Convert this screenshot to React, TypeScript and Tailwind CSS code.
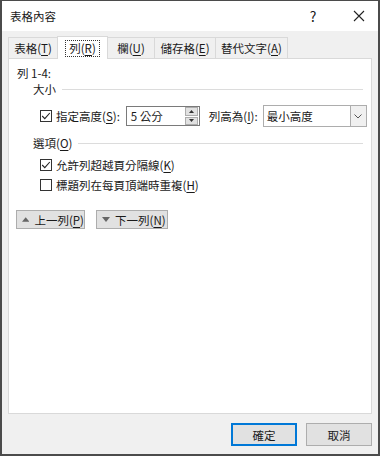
import React from "react";

const font = { fontFamily: '"Noto Sans CJK TC", "Microsoft JhengHei", sans-serif' };

function Key({ label, k }: { label: string; k: string }) {
  return (
    <span className="whitespace-nowrap">
      {label}(<span className="underline underline-offset-2">{k}</span>)
    </span>
  );
}

function Check({ on }: { on?: boolean }) {
  return (
    <span className="w-[12px] h-[12px] border border-[#333] bg-white flex items-center justify-center shrink-0">
      {on && (
        <svg width="10" height="10" viewBox="0 0 10 10">
          <path d="M1.2 5 L3.8 7.6 L8.8 2" fill="none" stroke="#222" strokeWidth="1.1" />
        </svg>
      )}
    </span>
  );
}

function Group({ children }: { children: React.ReactNode }) {
  return (
    <div className="flex items-center gap-[6px] pl-[24px] pr-[8px]">
      <span>{children}</span>
      <span className="flex-1 h-px bg-[#dcdcdc]" />
    </div>
  );
}

function Tab({ children, active, w }: { children: React.ReactNode; active?: boolean; w: string }) {
  if (active) {
    return (
      <div className={`${w} h-[23px] -mb-px -ml-px bg-white border border-b-0 border-[#d9d9d9] flex items-center justify-center relative z-10`}>
        <span className="border border-dotted border-[#333] px-[3px] h-[17px] flex items-center">{children}</span>
      </div>
    );
  }
  return (
    <div className={`${w} h-[21px] bg-[#f0f0f0] border border-b-0 border-[#d9d9d9] -ml-px flex items-center justify-center`}>
      {children}
    </div>
  );
}

export default function App() {
  return (
    <div
      className="w-[380px] h-[456px] border-l-2 border-t border-b-2 border-r-2 border-[#4b4b4b] bg-[#f0f0f0] flex flex-col text-[11.5px] leading-[16px] text-[#1a1a1a] whitespace-nowrap"
      style={font}
    >
      <div className="h-[30px] bg-white flex items-center pl-[8px] shrink-0">
        <span className="flex-1">表格內容</span>
        <span className="w-[20px] text-center text-[14px] mr-[30px]">?</span>
        <svg width="12" height="12" viewBox="0 0 12 12" className="mr-[13px]">
          <path d="M1 1 L11 11 M11 1 L1 11" stroke="#222" strokeWidth="1.1" />
        </svg>
      </div>

      <div className="flex-1 flex flex-col px-[6px] pt-[5px]">
        <div className="flex items-end pl-px">
          <Tab w="w-[50px]"><Key label="表格" k="T" /></Tab>
          <Tab w="w-[51px]" active><Key label="列" k="R" /></Tab>
          <Tab w="w-[48px]"><Key label="欄" k="U" /></Tab>
          <Tab w="w-[62px]"><Key label="儲存格" k="E" /></Tab>
          <Tab w="w-[73px]"><Key label="替代文字" k="A" /></Tab>
        </div>

        <div className="h-[356px] bg-white border border-[#d9d9d9] flex flex-col pt-[6px]">
          <div className="pl-[8px]">列 1-4:</div>
          <Group>大小</Group>

          <div className="flex items-center pl-[31px] mt-[8px]">
            <Check on />
            <span className="ml-[4px]"><Key label="指定高度" k="S" />:</span>
            <div className="ml-[6px] w-[74px] h-[20px] border border-[#7a7a7a] flex items-center shrink-0">
              <span className="flex-1 pl-[4px]">5 公分</span>
              <div className="w-[13px] h-[18px] flex flex-col gap-px mr-px">
                <div className="flex-1 bg-[#e1e1e1] border border-[#adadad] flex items-center justify-center">
                  <svg width="5" height="3" viewBox="0 0 5 3"><path d="M0 3 L2.5 0 L5 3Z" fill="#333" /></svg>
                </div>
                <div className="flex-1 bg-[#e1e1e1] border border-[#adadad] flex items-center justify-center">
                  <svg width="5" height="3" viewBox="0 0 5 3"><path d="M0 0 L2.5 3 L5 0Z" fill="#333" /></svg>
                </div>
              </div>
            </div>
            <span className="ml-[9px]"><Key label="列高為" k="I" />:</span>
            <div className="ml-[5px] w-[104px] h-[22px] border border-[#adadad] flex items-center shrink-0">
              <span className="flex-1 pl-[3px]">最小高度</span>
              <div className="w-[16px] h-[20px] border-l border-[#adadad] bg-[#f0f0f0] flex items-center justify-center">
                <svg width="8" height="5" viewBox="0 0 8 5"><path d="M0.5 0.5 L4 4 L7.5 0.5" fill="none" stroke="#555" /></svg>
              </div>
            </div>
          </div>

          <div className="mt-[8px]"><Group><Key label="選項" k="O" /></Group></div>

          <div className="flex flex-col gap-[4px] pl-[31px] mt-[6px]">
            <div className="flex items-center gap-[4px]"><Check on /><Key label="允許列超越頁分隔線" k="K" /></div>
            <div className="flex items-center gap-[4px]"><Check /><Key label="標題列在每頁頂端時重複" k="H" /></div>
          </div>

          <div className="flex gap-[11px] pl-[7px] mt-[17px]">
            <div className="w-[69px] h-[19px] bg-[#e1e1e1] border border-[#adadad] flex items-center pl-[5px] gap-[5px]">
              <svg width="8" height="5" viewBox="0 0 8 5"><path d="M0 5 L4 0 L8 5Z" fill="#666" /></svg>
              <Key label="上一列" k="P" />
            </div>
            <div className="w-[72px] h-[19px] bg-[#e1e1e1] border border-[#adadad] flex items-center pl-[5px] gap-[5px]">
              <svg width="8" height="5" viewBox="0 0 8 5"><path d="M0 0 L4 5 L8 0Z" fill="#666" /></svg>
              <Key label="下一列" k="N" />
            </div>
          </div>
        </div>

        <div className="flex justify-end gap-[9px] mt-[9px]">
          <div className="w-[66px] h-[23px] bg-[#e1e1e1] border-2 border-[#0078d7] flex items-center justify-center">確定</div>
          <div className="w-[66px] h-[23px] bg-[#e1e1e1] border border-[#adadad] flex items-center justify-center">取消</div>
        </div>
      </div>
    </div>
  );
}
